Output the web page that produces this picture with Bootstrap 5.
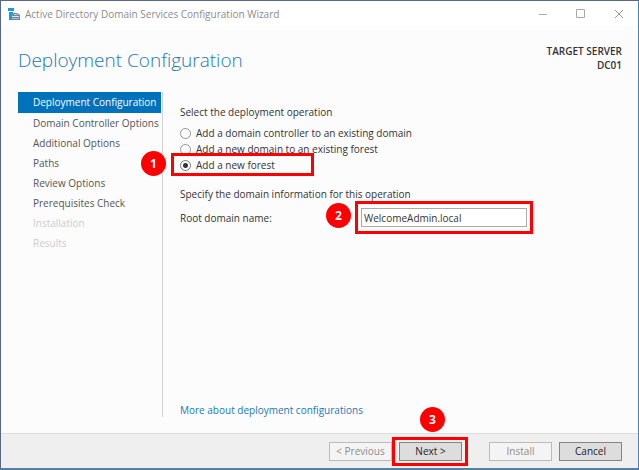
<!DOCTYPE html>
<html lang="en">
<head>
<meta charset="utf-8">
<meta name="viewport" content="width=device-width, initial-scale=1">
<title>Active Directory Domain Services Configuration Wizard</title>
<link href="https://cdn.jsdelivr.net/npm/bootstrap@5.3.0/dist/css/bootstrap.min.css" rel="stylesheet">
<style>
  body { font-family: "Open Sans", "Noto Sans", sans-serif; font-size: 10px; line-height: 16px; color: #333; background: #fcfcfc; }
  .wizard { border: 1px solid #566883; border-right-color: #4685b5; border-bottom: 2px solid #55819f; }
  .title-bar { height: 25px; padding-left: 7px; color: #8c8c8c; background: #fff; }
  .title-bar .win-btn { width: 38px; height: 25px; padding: 0; border: 0; background: none; display: flex; align-items: center; justify-content: center; }
  .wizard-head { padding: 18px 16px 0 17px; height: 66px; }
  .wizard-head h1 { font-size: 19px; line-height: 32px; font-weight: 300; color: #1f78b4; }
  .target { line-height: 14px; font-weight: 600; color: #333; }
  .steps { width: 145px; margin-left: 17px; border-right: 1px solid #d2d2d2; }
  .steps .nav-link { padding: 1px 0 0 15px; line-height: 19px; color: #555; border-radius: 0; white-space: nowrap; margin-right: 1px; }
  .steps .nav-link.active { background: #0072bc; color: #fff; padding-bottom: 1px; line-height: 19px; }
  .steps .nav-link.disabled { color: #ccc; }
  .pane { padding: 12px 17px 0; }
  .choices { margin-top: 5px; }
  .choice { gap: 5px; height: 16px; width: 131px; white-space: nowrap; }
  .choice input { appearance: none; flex: none; width: 11px; height: 11px; margin: 0; border: 1px solid #929292; border-radius: 50%; background: #fff; }
  .choice input:checked { background: radial-gradient(circle, #333 0 2px, #fff 3px); border-color: #777; }
  .marked { position: relative; }
  .marked::after { content: ""; position: absolute; inset: var(--inset); border: 3px solid red; pointer-events: none; z-index: 1; }
  .step-no { position: absolute; z-index: 2; width: 25px; height: 25px; line-height: 25px; border-radius: 50%; background: red; color: #fff; font-size: 12px; font-weight: 700; text-align: center; }
  .mark-forest { --inset: -4px -3px -3px -9px; }
  .mark-forest .step-no { left: -39px; top: -6px; }
  .mark-domain { --inset: -7px -6px; }
  .mark-domain .step-no { left: -35px; top: -5px; }
  .mark-next { --inset: -5px -6px -5px -7px; }
  .mark-next .step-no { left: 21px; top: -35px; }
  .section-label { margin-top: 13px; }
  .domain-row { margin-top: 6px; }
  .domain-label { width: 181px; }
  .domain-input { display: block; width: 166px; height: 19px; padding: 0 2px; border: 1px solid #ababab; border-radius: 0; background: #fff; color: #333; font-size: 10px; line-height: 17px; }
  .more { color: #1a7ab5; text-decoration: none; margin-bottom: 15px; }
  .wizard-foot { height: 35px; padding: 8px 16px 0 0; border-top: 1px solid #dedede; background: #efefef; }
  .wizard-foot .btn { display: block; width: 63px; height: 19px; padding: 0; border: 1px solid #858585; border-radius: 0; background: #ddd; color: #222; font-size: 10px; line-height: 17px; white-space: nowrap; }
  .wizard-foot .btn:disabled { opacity: 1; background: #f4f4f4; border-color: #bbb; color: #8c8c8c; }
  .foot-nav { gap: 7px; }
  .foot-end { margin-left: 27px; }
</style>
</head>
<body>
<div class="wizard d-flex flex-column min-vh-100">
  <header class="title-bar d-flex align-items-center">
    <svg width="13" height="14" viewBox="0 0 13 14" aria-hidden="true">
      <path fill="#1a9ad8" d="M0 1h6v3H0zM1 5h4v2L3 8v5H1z"/>
      <path fill="#6f88a6" d="M3 8l3-2h3l3 2v5H3z"/>
      <path fill="#dce4ed" d="M6 8l1-1h1l2 1zM4 9h7v1H4z"/>
      <path fill="#a9b9cc" d="M4 11h7v1H4z"/>
    </svg>
    <span class="flex-grow-1 ms-1">Active Directory Domain Services Configuration Wizard</span>
    <button type="button" class="win-btn" aria-label="Minimize"><svg width="10" height="10"><path d="M1 5.500h8" stroke="#aaa"/></svg></button>
    <button type="button" class="win-btn" aria-label="Maximize"><svg width="10" height="10"><path d="M.5 .5h8v8h-8z" fill="none" stroke="#aaa"/></svg></button>
    <button type="button" class="win-btn" aria-label="Close"><svg width="10" height="10"><path d="M1 1l8 8m0-8l-8 8" stroke="#999"/></svg></button>
  </header>
  <div class="wizard-head d-flex justify-content-between">
    <h1 class="m-0">Deployment Configuration</h1>
    <div class="target text-end">
      <div>TARGET SERVER</div>
      <div>DC01</div>
    </div>
  </div>
  <div class="d-flex flex-grow-1">
    <div class="d-flex flex-shrink-0 pb-3">
      <nav class="steps nav nav-pills flex-column flex-nowrap" aria-label="Wizard steps">
        <a class="nav-link active" href="#" aria-current="step">Deployment Configuration</a>
        <a class="nav-link" href="#">Domain Controller Options</a>
        <a class="nav-link" href="#">Additional Options</a>
        <a class="nav-link" href="#">Paths</a>
        <a class="nav-link" href="#">Review Options</a>
        <a class="nav-link" href="#">Prerequisites Check</a>
        <a class="nav-link disabled" href="#" aria-disabled="true">Installation</a>
        <a class="nav-link disabled" href="#" aria-disabled="true">Results</a>
      </nav>
    </div>
    <main class="pane d-flex flex-column flex-grow-1">
      <div id="op-label">Select the deployment operation</div>
      <div class="choices" role="radiogroup" aria-labelledby="op-label">
        <div class="choice d-flex align-items-center"><input type="radio" name="op" id="op1"><label for="op1">Add a domain controller to an existing domain</label></div>
        <div class="choice d-flex align-items-center"><input type="radio" name="op" id="op2"><label for="op2">Add a new domain to an existing forest</label></div>
        <div class="choice marked mark-forest d-flex align-items-center"><input type="radio" name="op" id="op3" checked><label for="op3">Add a new forest</label><span class="step-no">1</span></div>
      </div>
      <div class="section-label">Specify the domain information for this operation</div>
      <div class="domain-row d-flex align-items-center">
        <label class="domain-label" for="domain">Root domain name:</label>
        <div class="marked mark-domain">
          <input class="domain-input" id="domain" type="text" value="WelcomeAdmin.local">
          <span class="step-no">2</span>
        </div>
      </div>
      <a class="more mt-auto align-self-start" href="#">More about deployment configurations</a>
    </main>
  </div>
  <footer class="wizard-foot d-flex justify-content-end">
    <div class="foot-nav d-flex align-items-start">
      <button type="button" class="btn" disabled>&lt; Previous</button>
      <div class="marked mark-next">
        <button type="button" class="btn">Next &gt;</button>
        <span class="step-no">3</span>
      </div>
    </div>
    <div class="foot-nav foot-end d-flex align-items-start">
      <button type="button" class="btn" disabled>Install</button>
      <button type="button" class="btn">Cancel</button>
    </div>
  </footer>
</div>
<script src="https://cdn.jsdelivr.net/npm/bootstrap@5.3.0/dist/js/bootstrap.bundle.min.js"></script>
</body>
</html>
